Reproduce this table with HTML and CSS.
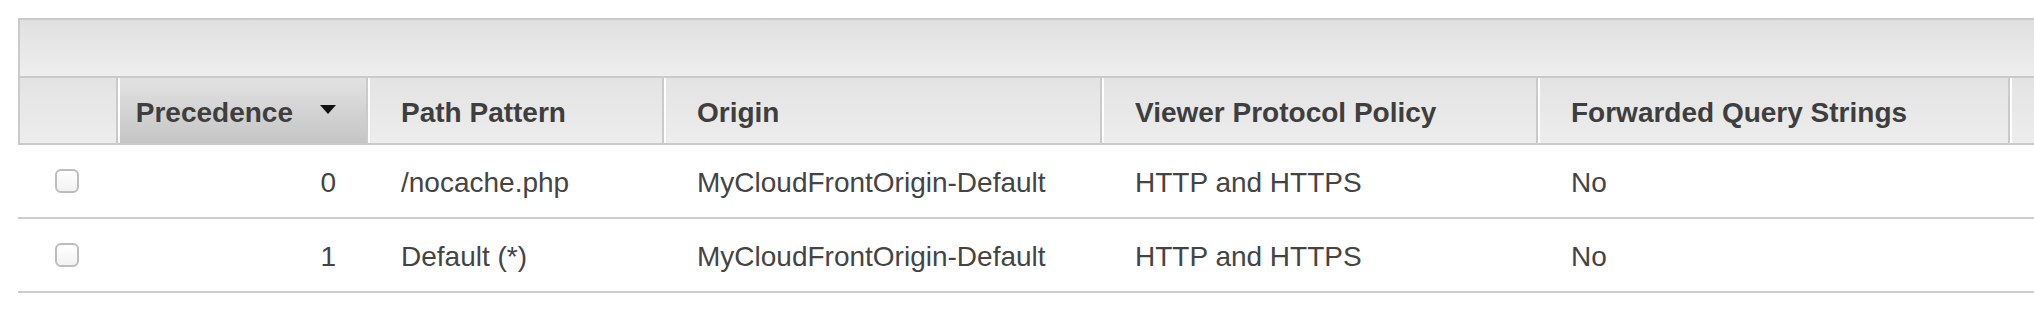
FILE: index.html
```html
<!DOCTYPE html>
<html>
<head>
<meta charset="utf-8">
<link rel="stylesheet" href="styles.css">
</head>
<body>
<div class="panel">
  <div class="toolbar"></div>
  <div class="row head">
    <div class="hcell first"></div>
    <div class="hcell sorted"><span>Precedence</span><span class="caret"></span></div>
    <div class="hcell">Path Pattern</div>
    <div class="hcell">Origin</div>
    <div class="hcell">Viewer Protocol Policy</div>
    <div class="hcell">Forwarded Query Strings</div>
    <div class="hcell"></div>
  </div>
  <div class="row body">
    <div class="cell check"><input type="checkbox" class="cb"></div>
    <div class="cell num">0</div>
    <div class="cell">/nocache.php</div>
    <div class="cell">MyCloudFrontOrigin-Default</div>
    <div class="cell">HTTP and HTTPS</div>
    <div class="cell">No</div>
    <div class="cell"></div>
  </div>
  <div class="row body">
    <div class="cell check"><input type="checkbox" class="cb"></div>
    <div class="cell num">1</div>
    <div class="cell">Default (*)</div>
    <div class="cell">MyCloudFrontOrigin-Default</div>
    <div class="cell">HTTP and HTTPS</div>
    <div class="cell">No</div>
    <div class="cell"></div>
  </div>
</div>
</body>
</html>
```
FILE: styles.css
```css
html, body {
  margin: 0;
  padding: 0;
  background: #fff;
  overflow: hidden;
}
body {
  font-family: "Liberation Sans", Helvetica, Arial, sans-serif;
  font-size: 28px;
  color: #444;
}
.panel {
  margin: 18px 0 0 18px;
  width: 2200px;
}
.toolbar {
  height: 56px;
  border-top: 2px solid #cacaca;
  border-left: 2px solid #cacaca;
  border-bottom: 2px solid #cacaca;
  background: linear-gradient(#e0e0e0, #eeeeee);
}
.row {
  display: grid;
  grid-template-columns: 100px 250px 296px 438px 436px 472px 1fr;
}
.head {
  height: 65px;
  border-bottom: 2px solid #cacaca;
}
.hcell {
  box-sizing: border-box;
  display: flex;
  align-items: center;
  padding: 4px 0 0 31px;
  border-left: 2px solid #fff;
  border-right: 2px solid #cacaca;
  background: linear-gradient(#e3e3e3, #ededed);
  font-weight: bold;
  color: #3e3e3e;
}
.hcell.first {
  border-left-color: #cacaca;
}
.hcell.sorted {
  justify-content: flex-end;
  padding: 4px 30px 0 0;
  gap: 27px;
  background: linear-gradient(#e2e2e2, #c5c5c5);
}
.caret {
  width: 0;
  height: 0;
  border-left: 8px solid transparent;
  border-right: 8px solid transparent;
  border-top: 9px solid #111;
  margin-bottom: 6px;
}
.body {
  height: 72px;
  border-bottom: 2px solid #cdcdcd;
}
.cell {
  display: flex;
  align-items: center;
  padding: 4px 0 0 33px;
  white-space: nowrap;
}
.cell.num {
  justify-content: flex-end;
  padding: 4px 32px 0 0;
}
.cell.check {
  justify-content: center;
  padding: 0 0 1px 0;
}
.cb {
  appearance: none;
  -webkit-appearance: none;
  margin: 0 2px 0 0;
  width: 24px;
  height: 24px;
  box-sizing: border-box;
  border: 2px solid #bdbdbd;
  border-radius: 6px;
  background: linear-gradient(#ffffff, #f2f2f2);
}
```
